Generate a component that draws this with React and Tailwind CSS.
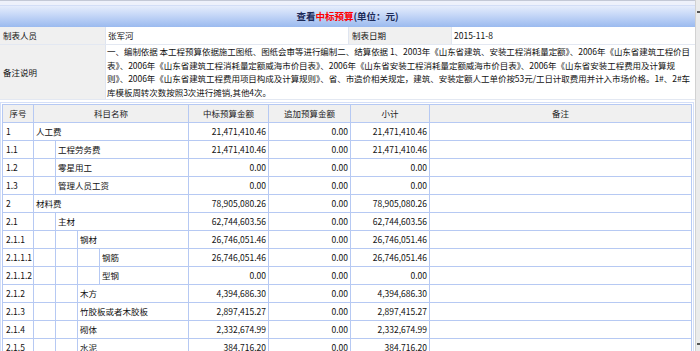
const rows = [
  ["1", "人工费", 0, "21,471,410.46", "0.00", "21,471,410.46"],
  ["1.1", "工程劳务费", 1, "21,471,410.46", "0.00", "21,471,410.46"],
  ["1.2", "零星用工", 1, "0.00", "0.00", "0.00"],
  ["1.3", "管理人员工资", 1, "0.00", "0.00", "0.00"],
  ["2", "材料费", 0, "78,905,080.26", "0.00", "78,905,080.26"],
  ["2.1", "主材", 1, "62,744,603.56", "0.00", "62,744,603.56"],
  ["2.1.1", "钢材", 2, "26,746,051.46", "0.00", "26,746,051.46"],
  ["2.1.1.1", "钢筋", 3, "26,746,051.46", "0.00", "26,746,051.46"],
  ["2.1.1.2", "型钢", 3, "0.00", "0.00", "0.00"],
  ["2.1.2", "木方", 2, "4,394,686.30", "0.00", "4,394,686.30"],
  ["2.1.3", "竹胶板或者木胶板", 2, "2,897,415.27", "0.00", "2,897,415.27"],
  ["2.1.4", "砌体", 2, "2,332,674.99", "0.00", "2,332,674.99"],
  ["2.1.5", "水泥", 2, "384,716.20", "0.00", "384,716.20"],
];

const remarkLines = [
  "一、编制依据 本工程预算依据施工图纸、图纸会审等进行编制二、结算依据 1、2003年《山东省建筑、安装工程消耗量定额》、2006年《山东省建筑工程价目",
  "表》、2006年《山东省建筑工程消耗量定额威海市价目表》、2006年《山东省安装工程消耗量定额威海市价目表》、2006年《山东省安装工程费用及计算规",
  "则》、2006年《山东省建筑工程费用项目构成及计算规则》、省、市造价相关规定，建筑、安装定额人工单价按53元/工日计取费用并计入市场价格。1#、2#车",
  "库模板周转次数按照3次进行摊销,其他4次。",
];

function NameCell({ level, name }) {
  return (
    <div className="flex w-[155px] shrink-0 border-r border-[#b6c9f3]">
      {Array.from({ length: level }).map((_, i) => (
        <div key={i} className="w-[22px] shrink-0 border-r border-[#b6c9f3]" />
      ))}
      <div className="flex items-center pl-[2px] whitespace-nowrap">{name}</div>
    </div>
  );
}

export default function App() {
  return (
    <div className="flex w-[700px] h-[351px] overflow-hidden bg-white font-['Noto_Sans_CJK_SC',sans-serif] text-[8.5px] text-[#111]">
      <div className="w-[695px] shrink-0">
        {/* window top edge */}
        <div className="h-px bg-[#c3c8d6]" />
        <div className="h-[4px] bg-[#eef1fb]" />

        {/* title bar */}
        <div className="flex h-[22px] items-center justify-center border-t border-[#d3def7] bg-gradient-to-b from-[#e6edfc] to-[#9bbaef] text-[9.5px] font-bold text-[#1c2a58]">
          查看<span className="text-[#f00]">中标预算</span>(单位：元)
        </div>

        {/* info table */}
        <div className="flex h-[18px] border-b border-[#e3e8f2]">
          <div className="flex w-[106px] shrink-0 items-center border-r border-[#dfe5f0] bg-[#f0f0f0] pl-[3px]">制表人员</div>
          <div className="flex w-[243px] shrink-0 items-center border-r border-[#dfe5f0] pl-[2px]">张军河</div>
          <div className="flex w-[103px] shrink-0 items-center border-r border-[#dfe5f0] bg-[#f0f0f0] pl-[3px]">制表日期</div>
          <div className="flex flex-1 items-center pl-[2px]">2015-11-8</div>
        </div>
        <div className="flex h-[55px] border-b border-[#e3e8f2]">
          <div className="flex w-[106px] shrink-0 items-center border-r border-[#dfe5f0] bg-[#f0f0f0] pl-[3px]">备注说明</div>
          <div className="flex flex-col justify-center pl-[1px] leading-[13.5px] tracking-[-0.04px]">
            {remarkLines.map((l, i) => (
              <div key={i} className="whitespace-nowrap">{l}</div>
            ))}
          </div>
        </div>

        {/* data table */}
        <div className="mt-[2px] mr-px border border-[#d4dff8] p-px">
          <div className="border-l border-t border-r border-[#b6c9f3]">
            <div className="flex h-[18px] border-b border-[#b6c9f3] bg-[#f0f0f0] text-[#222]">
              <div className="flex w-[31px] shrink-0 items-center justify-center border-r border-[#b6c9f3]">序号</div>
              <div className="flex w-[155px] shrink-0 items-center justify-center border-r border-[#b6c9f3]">科目名称</div>
              <div className="flex w-[80px] shrink-0 items-center justify-center border-r border-[#b6c9f3]">中标预算金额</div>
              <div className="flex w-[82px] shrink-0 items-center justify-center border-r border-[#b6c9f3]">追加预算金额</div>
              <div className="flex w-[79px] shrink-0 items-center justify-center border-r border-[#b6c9f3]">小计</div>
              <div className="flex flex-1 items-center justify-center">备注</div>
            </div>
            {rows.map(([no, name, level, a, b, c]) => (
              <div key={no} className="flex h-[18px] border-b border-[#b6c9f3]">
                <div className="flex w-[31px] shrink-0 items-center border-r border-[#b6c9f3] pl-[3px]">{no}</div>
                <NameCell level={level} name={name} />
                <div className="flex w-[80px] shrink-0 items-center justify-end border-r border-[#b6c9f3] pr-[2px]">{a}</div>
                <div className="flex w-[82px] shrink-0 items-center justify-end border-r border-[#b6c9f3] pr-[2px]">{b}</div>
                <div className="flex w-[79px] shrink-0 items-center justify-end border-r border-[#b6c9f3] pr-[2px]">{c}</div>
                <div className="flex-1" />
              </div>
            ))}
          </div>
        </div>
      </div>

      {/* scrollbar edge */}
      <div className="relative flex-1 border-l border-[#d2d2d2] bg-[#ebebeb]">
        <div className="absolute right-0 top-[11px] h-[2px] w-[3px] bg-[#555]" />
        <div className="absolute right-0 top-[343px] h-[2px] w-[3px] bg-[#555]" />
      </div>
    </div>
  );
}
